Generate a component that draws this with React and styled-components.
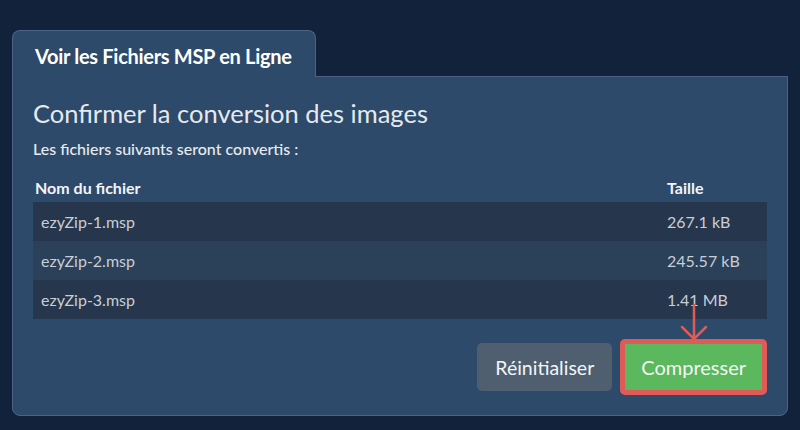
import styled, { createGlobalStyle } from "styled-components";

const Global = createGlobalStyle`
  body {
    margin: 0;
    background: #11223a;
    font-family: Lato, "Open Sans", sans-serif;
  }
`;

const Page = styled.div`
  padding: 30px 12px 0;
`;

const Tab = styled.div`
  position: relative;
  z-index: 1;
  display: inline-block;
  width: 304px;
  box-sizing: border-box;
  height: 47px;
  margin-bottom: -1px;
  padding: 0 22px;
  background: #2d4a6a;
  border: 1px solid #4b6485;
  border-bottom: none;
  border-radius: 8px 8px 0 0;
  color: #ffffff;
  font-size: 20px;
  font-weight: 700;
  line-height: 50px;
  letter-spacing: -0.3px;
  white-space: nowrap;
`;

const Panel = styled.div`
  background: #2d4a6a;
  border: 1px solid #4b6485;
  border-radius: 0 0 8px 8px;
  padding: 20px 20px 20px;
`;

const Title = styled.h2`
  margin: 0;
  color: #e6e9ee;
  font-size: 25.5px;
  font-weight: 400;
  line-height: 32px;
`;

const Subtitle = styled.p`
  margin: 10px 0 0;
  color: #e8ebef;
  font-size: 16px;
  font-weight: 500;
  line-height: 20px;
`;

const Table = styled.div`
  margin-top: 15px;
`;

const Head = styled.div`
  display: grid;
  grid-template-columns: 1fr 92px;
  padding: 0 8px 0 2px;
  height: 28px;
  line-height: 28px;
  color: #f2f4f7;
  font-size: 16px;
  font-weight: 700;
`;

const Row = styled.div`
  display: grid;
  grid-template-columns: 1fr 92px;
  padding: 0 8px;
  height: 39px;
  line-height: 39px;
  background: ${(p) => (p.$alt ? "#2b4059" : "#25364d")};
  color: #c9ced6;
  font-size: 16px;
`;

const Actions = styled.div`
  display: flex;
  justify-content: flex-end;
  align-items: center;
  gap: 8px;
  margin-top: 20px;
`;

const Button = styled.button`
  position: relative;
  box-sizing: border-box;
  height: ${(p) => (p.$primary ? "56px" : "48px")};
  padding: 0 ${(p) => (p.$primary ? "16px" : "18px")};
  border: ${(p) => (p.$primary ? "5px solid #e05b57" : "none")};
  border-radius: 5px;
  background: ${(p) => (p.$primary ? "#5cb85c" : "#4f5f70")};
  color: #f3f5f7;
  font-family: inherit;
  font-size: ${(p) => (p.$primary ? "20px" : "19.5px")};
  font-weight: 400;
  cursor: pointer;
`;

const Arrow = styled.svg`
  position: absolute;
  left: 50%;
  bottom: 100%;
  margin-left: -14px;
  margin-bottom: 2px;
`;

const files = [
  { name: "ezyZip-1.msp", size: "267.1 kB" },
  { name: "ezyZip-2.msp", size: "245.57 kB" },
  { name: "ezyZip-3.msp", size: "1.41 MB" },
];

export default function App() {
  return (
    <Page>
      <Global />
      <Tab>Voir les Fichiers MSP en Ligne</Tab>
      <Panel>
        <Title>Confirmer la conversion des images</Title>
        <Subtitle>Les fichiers suivants seront convertis :</Subtitle>
        <Table>
          <Head>
            <span>Nom du fichier</span>
            <span>Taille</span>
          </Head>
          {files.map((f, i) => (
            <Row key={f.name} $alt={i % 2 === 1}>
              <span>{f.name}</span>
              <span>{f.size}</span>
            </Row>
          ))}
        </Table>
        <Actions>
          <Button>Réinitialiser</Button>
          <Button $primary>
            Compresser
            <Arrow width="28" height="38" viewBox="0 0 28 38">
              <path
                d="M14 1 V35 M2 23 L14 35 L26 23"
                fill="none"
                stroke="#e05b57"
                strokeWidth="2.5"
                strokeLinecap="round"
              />
            </Arrow>
          </Button>
        </Actions>
      </Panel>
    </Page>
  );
}
